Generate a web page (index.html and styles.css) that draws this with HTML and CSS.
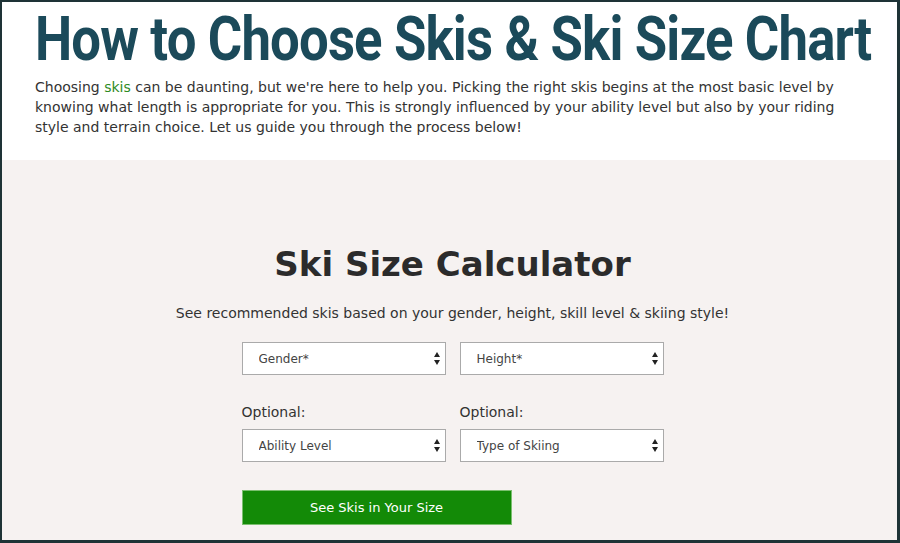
FILE: index.html
```html
<!DOCTYPE html>
<html lang="en">
<head>
    <meta charset="UTF-8">
    <meta name="viewport" content="width=device-width, initial-scale=1.0">
    <title>How to Choose Skis &amp; Ski Size Chart</title>
    <link rel="stylesheet" href="styles.css">
</head>
<body>
    <div class="frame">
        <section class="intro">
            <h1>How to Choose Skis &amp; Ski Size Chart</h1>
            <p>Choosing <a href="#">skis</a> can be daunting, but we're here to help you. Picking the right skis begins at the most basic level by knowing what length is appropriate for you. This is strongly influenced by your ability level but also by your riding style and terrain choice. Let us guide you through the process below!</p>
        </section>

        <section class="calculator">
            <h2>Ski Size Calculator</h2>
            <p class="lead">See recommended skis based on your gender, height, skill level &amp; skiing style!</p>

            <form class="size-form">
                <div class="row">
                    <div class="field">
                        <span class="select">
                            <select>
                                <option>Gender*</option>
                            </select>
                        </span>
                    </div>
                    <div class="field">
                        <span class="select">
                            <select>
                                <option>Height*</option>
                            </select>
                        </span>
                    </div>
                </div>
                <div class="row optional">
                    <label class="field">Optional:
                        <span class="select">
                            <select>
                                <option>Ability Level</option>
                            </select>
                        </span>
                    </label>
                    <label class="field">Optional:
                        <span class="select">
                            <select>
                                <option>Type of Skiing</option>
                            </select>
                        </span>
                    </label>
                </div>
                <button type="button">See Skis in Your Size</button>
            </form>
        </section>
    </div>
</body>
</html>
```

FILE: styles.css
```css
html, body {
    margin: 0;
    height: 100%;
}

body {
    font-family: "DejaVu Sans", sans-serif;
    color: #333;
}

.frame {
    height: 543px;
    box-sizing: border-box;
    border: 2px solid #1e3336;
    border-right-width: 3px;
    border-bottom-width: 3px;
    display: flex;
    flex-direction: column;
    background: #fff;
    overflow: hidden;
}

.intro {
    height: 158px;
    padding: 0 0 0 33px;
}

/* no condensed face installed, so squeeze Roboto */
.intro h1 {
    margin: 2px 0 0;
    font-family: "Roboto", sans-serif;
    font-weight: bold;
    font-size: 62px;
    line-height: 70px;
    letter-spacing: -1px;
    color: #1b4a5a;
    white-space: nowrap;
    transform: scaleX(0.85);
    transform-origin: left center;
}

.intro p {
    margin: 3px 0 0;
    width: 830px;
    font-size: 14px;
    line-height: 20px;
    color: #333;
}

.intro a {
    color: #2e8b1f;
    text-decoration: none;
}

.calculator {
    flex: 1;
    background: #f6f2f1;
    display: flex;
    flex-direction: column;
    align-items: center;
    padding-left: 6px;
}

.calculator h2 {
    margin: 82px 0 0;
    font-size: 34px;
    line-height: 44px;
    color: #2b2b2b;
}

.lead {
    margin: 17px 0 0;
    font-size: 14px;
    line-height: 20px;
}

.size-form {
    width: 422px;
    margin-top: 19px;
}

.row {
    display: flex;
    gap: 14px;
}

.row.optional {
    margin-top: 27px;
}

.field {
    flex: 1;
    display: flex;
    flex-direction: column;
    gap: 7px;
    font-size: 14px;
    line-height: 20px;
}

.select {
    position: relative;
    display: block;
}

.select::before,
.select::after {
    content: "";
    position: absolute;
    right: 6px;
    border-left: 3.5px solid transparent;
    border-right: 3.5px solid transparent;
    pointer-events: none;
}

.select::before {
    top: 10px;
    border-bottom: 5px solid #222;
}

.select::after {
    top: 18px;
    border-top: 5px solid #222;
}

select {
    appearance: none;
    -webkit-appearance: none;
    display: block;
    width: 100%;
    height: 33px;
    padding: 0 0 0 16px;
    border: 1px solid #aaa;
    border-radius: 0;
    background: #fff;
    font-family: inherit;
    font-size: 12px;
    color: #444;
}

.size-form button {
    margin-top: 28px;
    width: 270px;
    height: 35px;
    border: 1px solid #7bbf6f;
    background: #138a07;
    color: #fff;
    font-family: inherit;
    font-size: 13px;
    cursor: pointer;
}
```
